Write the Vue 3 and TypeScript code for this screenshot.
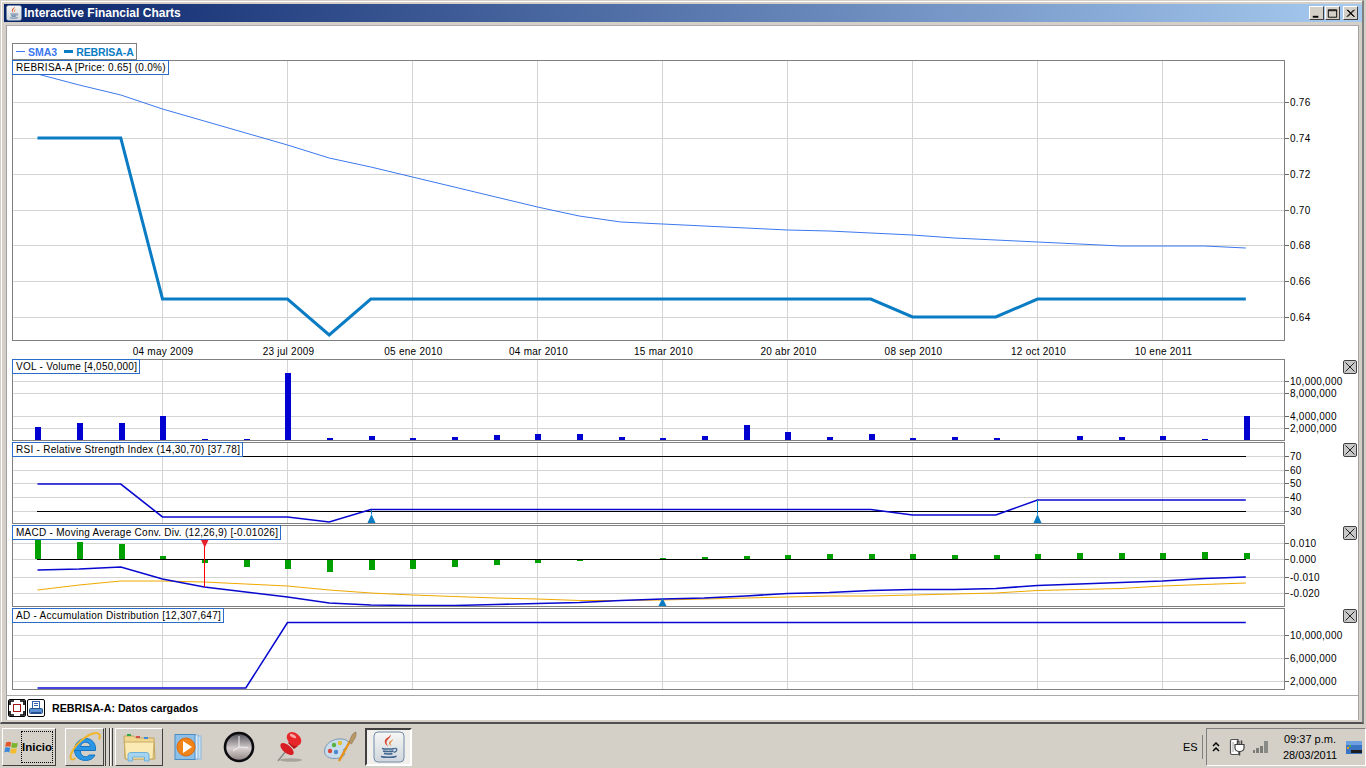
<template>
  <div class="screen">
    <svg class="defs" width="0" height="0">
      <symbol id="java-cup" viewBox="0 0 32 32">
        <rect x="1" y="1" width="30" height="30" rx="4" fill="url(#javaBg)" stroke="#6f8ba8" />
        <path d="M17.500 3.500c1.500 3-4.500 5-4 8.500.2 1.200 1 2.300 1.800 3.500-3-1.800-4.300-4-3.200-6.500 1.200-2.300 5-3.200 5.400-5.500z" fill="#d8452c" />
        <path d="M20 8c.5 1.800-3 3-2.500 5 .1.800.6 1.500 1 2-2.200-1-3-2.400-2.200-4 .8-1.300 3-1.600 3.700-3z" fill="#e8873a" />
        <path d="M9 17.500c2.500.8 10 .8 12.500 0M10 20c2 .7 8.500.7 10.500 0M11 22.500c2 .6 7 .6 8.500 0M8 25.500c3 1.200 12 1.200 15.500-.3" fill="none" stroke="#3f6590" stroke-width="1.500" />
        <path d="M21.500 17.500c3-.8 3.500 2.800-.8 3.800" fill="none" stroke="#3f6590" stroke-width="1.200" />
      </symbol>
      <linearGradient id="javaBg" x1="0" y1="0" x2="0" y2="1">
        <stop offset="0" stop-color="#f7f7f5" />
        <stop offset="1" stop-color="#cfd6dc" />
      </linearGradient>
    </svg>

    <div class="frame">
      <div class="titlebar">
        <svg class="title-icon" width="16" height="16"><use href="#java-cup" /></svg>
        <span class="title-text">Interactive Financial Charts</span>
        <div class="win-buttons">
          <button class="win-btn">
            <svg width="14" height="13" viewBox="0 0 14 13"><rect x="3" y="9" width="6" height="2" fill="#000" /></svg>
          </button>
          <button class="win-btn">
            <svg width="14" height="13" viewBox="0 0 14 13"><path d="M2.500 2.500h9v8h-9zM2.500 3.500h9" fill="none" stroke="#000" /></svg>
          </button>
          <button class="win-btn win-close">
            <svg width="14" height="13" viewBox="0 0 14 13"><path d="M3 2.500l7.500 7.500M4 2.500l7.500 7.500M10.500 2.500L3 10M11.500 2.500L4 10" stroke="#000" fill="none" /></svg>
          </button>
        </div>
      </div>

      <div class="client">
        <div class="charts">
          <div class="series-legend">
            <span class="swatch swatch-sma"></span><span class="name name-sma">SMA3</span>
            <span class="swatch swatch-price"></span><span class="name name-price">REBRISA-A</span>
          </div>

          <div v-for="p in panels" :key="p.id" class="panel" :style="{ height: p.height + 'px' }">
            <svg
              width="1346"
              :height="p.height"
              :viewBox="`12 ${p.top} 1346 ${p.height}`"
              class="plot"
            >
              <g shape-rendering="crispEdges" stroke="#d4d4d4">
                <line
                  v-for="x in gridX"
                  :key="x"
                  :x1="x"
                  :x2="x"
                  :y1="p.top"
                  :y2="p.top + p.plotH"
                />
                <line
                  v-for="t in p.ticks"
                  :key="t.y"
                  x1="12"
                  x2="1285"
                  :y1="t.y + 0.5"
                  :y2="t.y + 0.5"
                />
              </g>
              <g shape-rendering="crispEdges" stroke="#666">
                <line
                  v-for="t in p.ticks"
                  :key="t.y"
                  x1="1285"
                  x2="1289"
                  :y1="t.y + 0.5"
                  :y2="t.y + 0.5"
                />
              </g>
              <text v-for="t in p.ticks" :key="t.label" x="1290" :y="t.y + 4" class="axis">{{ t.label }}</text>

              <!-- vol / macd bars -->
              <g shape-rendering="crispEdges">
                <rect
                  v-for="(b, i) in p.bars"
                  :key="i"
                  :x="b.x"
                  :y="b.y"
                  width="6"
                  :height="b.h"
                  :fill="p.barColor"
                />
              </g>
              <g shape-rendering="crispEdges" stroke="#000">
                <line
                  v-for="y in p.blackLines"
                  :key="y"
                  x1="37"
                  x2="1246"
                  :y1="y + 0.5"
                  :y2="y + 0.5"
                />
              </g>
              <polyline
                v-for="l in p.lines"
                :key="l.color"
                :points="l.points"
                fill="none"
                :stroke="l.color"
                :stroke-width="l.width"
                stroke-linejoin="miter"
              />
              <g v-for="m in p.upMarks" :key="m.x">
                <line :x1="m.x" :x2="m.x" :y1="m.from" :y2="m.tip" stroke="#0a7cc4" />
                <path :d="`M${m.x} ${m.tip}l4 ${m.base - m.tip}h-8z`" fill="#0a7cc4" />
              </g>
              <g v-if="p.id === 'macd'">
                <line x1="204.500" x2="204.500" y1="543" y2="587" stroke="#f00" />
                <path d="M201 540h7.500l-3.700 7.500z" fill="#e8202c" />
              </g>

              <text
                v-for="d in p.dates"
                :key="d.label"
                :x="d.x"
                y="355"
                text-anchor="middle"
                class="axis"
              >{{ d.label }}</text>

              <rect
                x="12.500"
                :y="p.top + 0.5"
                width="1272"
                :height="p.plotH"
                fill="none"
                stroke="#808080"
                shape-rendering="crispEdges"
              />
            </svg>
            <div class="panel-tag">{{ p.title }}</div>
            <button v-if="p.closable" class="panel-close">
              <svg width="12" height="12" viewBox="0 0 12 12"><path d="M1.500 1.500l9 9M10.500 1.500l-9 9" stroke="#222" fill="none" /></svg>
            </button>
          </div>
        </div>

        <div class="statusbar">
          <button class="tool">
            <svg width="16" height="16" viewBox="0 0 16 16">
              <rect x="4.500" y="4.500" width="7" height="7" fill="none" stroke="#a01818" />
              <path d="M1 5V1h4M11 1h4v4M15 11v4h-4M5 15H1v-4" fill="none" stroke="#000" stroke-width="1.600" />
            </svg>
          </button>
          <button class="tool">
            <svg width="16" height="16" viewBox="0 0 16 16">
              <rect x="4.500" y="1.500" width="7" height="7" fill="#fff" stroke="#3060a8" />
              <path d="M6 3.500h4M6 5.500h4" stroke="#3060a8" />
              <rect x="1.500" y="8.500" width="13" height="5" rx="1" fill="#5c90d0" stroke="#24508c" />
              <rect x="3" y="12" width="10" height="2" fill="#24508c" />
            </svg>
          </button>
          <span class="status-text">REBRISA-A: Datos cargados</span>
        </div>
      </div>
    </div>

    <div class="taskbar">
      <button class="task-btn start">
        <svg width="16" height="15" viewBox="0 0 16 15" class="flag">
          <path d="M2 2.500c2-1.200 3.500-1 5.200-.2L6.300 7c-1.500-.8-3-.9-5-.1z" fill="#e2562a" />
          <path d="M8 2.600c1.700.8 3.500 1 5.800.1L13 7.300c-2.200.8-4 .6-5.800-.1z" fill="#7ab52c" />
          <path d="M1.200 7.800c2-.8 3.500-.6 5 .1l-.9 4.600c-1.500-.8-3-.9-5-.1z" fill="#3c8ad8" />
          <path d="M7 8.200c1.800.7 3.600.9 5.800.1L12 13c-2.200.8-4 .6-5.800-.1z" fill="#f2bc2c" />
        </svg>
        <span class="start-label">Inicio</span>
      </button>

      <button class="task-btn ie">
        <svg width="32" height="32" viewBox="0 0 32 32">
          <path d="M4.500 19.500h22c.8-7-3.500-12-9.500-12-6.500 0-11.500 5-11.500 11.500 0 6.500 5 10.500 11 10.500 4.500 0 8-2 9.500-5.500h-6c-1 1.200-2 1.700-3.500 1.700-2.800 0-5-2-5.200-5.700M11.500 15.500c.3-2.500 2.500-4.300 5-4.300s4.700 1.800 5 4.300z" fill="#2a96e4" stroke="#1676c4" stroke-width="1" fill-rule="evenodd" />
          <path d="M6.500 27C1 31 .5 26 3 21 7 12.500 19 2.500 27 2c4-.2 4.500 3 3 6.500" fill="none" stroke="#f0b628" stroke-width="2" />
        </svg>
      </button>
      <div class="task-handle"></div>
      <button class="task-btn folder">
        <svg width="33" height="31" viewBox="0 0 33 31">
          <path d="M1 4h10l2 2h18l1 21H2z" fill="#f0d690" stroke="#c4a65c" />
          <rect x="4" y="2" width="4" height="2" fill="#2fa84a" />
          <rect x="13" y="4" width="4" height="2" fill="#d8504a" />
          <rect x="21" y="5" width="4" height="2" fill="#3a8ad8" />
          <path d="M1.500 10h29.500l-1 17H2.500z" fill="#fbeab4" stroke="#c9ac64" />
          <path d="M5 23c0-1.500 1-2.500 2.500-2.500h16c1.500 0 2.500 1 2.500 2.500v6h-4.500v-4h-12v4H5z" fill="#a4d4f0" stroke="#6fb0d8" />
        </svg>
      </button>

      <div class="slot slot-media">
        <svg width="30" height="27" viewBox="0 0 30 27">
          <rect x="7" y="2" width="20" height="23" fill="#c6e0f4" stroke="#8fb8dc" />
          <rect x="4" y="1" width="20" height="24" fill="#dcecf8" stroke="#8fb8dc" />
          <rect x="1" y="0.500" width="20" height="25" fill="#8cc0e8" stroke="#4a8cc4" />
          <circle cx="12" cy="13" r="9" fill="#f08418" stroke="#d86810" />
          <path d="M9 7l9 6-9 6z" fill="#fff" />
        </svg>
      </div>
      <div class="slot slot-clock">
        <svg width="32" height="32" viewBox="0 0 32 32">
          <defs>
            <linearGradient id="clockFace" x1="0" y1="0" x2="0" y2="1">
              <stop offset="0" stop-color="#4c4c54" />
              <stop offset="0.55" stop-color="#d8d0d0" />
              <stop offset="1" stop-color="#8a8080" />
            </linearGradient>
          </defs>
          <circle cx="16" cy="16" r="14" fill="url(#clockFace)" stroke="#0c0c10" stroke-width="2.600" />
          <path d="M16 5v11l-6 4M16 16l9 .5" fill="none" stroke="#f0f0f0" stroke-width="1" />
        </svg>
      </div>
      <div class="slot slot-pin">
        <svg width="28" height="32" viewBox="0 0 28 32">
          <ellipse cx="15" cy="29" rx="11" ry="1.800" fill="#a8a49c" />
          <path d="M2 30l8-10" stroke="#8a8a88" stroke-width="1.500" />
          <path d="M15 9l7 6-4 3-6-6z" fill="#b81616" />
          <ellipse cx="11" cy="18" rx="8" ry="4" transform="rotate(40 11 18)" fill="#d81e22" />
          <ellipse cx="18" cy="8" rx="8" ry="6" transform="rotate(40 18 8)" fill="#e8262a" />
          <ellipse cx="17" cy="5" rx="3.500" ry="1.500" transform="rotate(30 17 5)" fill="#f8a8a8" />
        </svg>
      </div>
      <div class="slot slot-paint">
        <svg width="34" height="32" viewBox="0 0 34 32">
          <path d="M1.500 21C1 13 10 7 19 8c6 .6 8 4 6 7-1.800 2.500-4 1.500-4.500 4-.6 2.500 2.500 3 .5 5.500C17 29 2 29 1.500 21z" fill="#c8dcec" stroke="#7a98b4" />
          <circle cx="7" cy="20" r="2.200" fill="#d84838" />
          <circle cx="11" cy="14" r="2.200" fill="#58b040" />
          <circle cx="17" cy="12" r="2.200" fill="#e4c030" />
          <circle cx="13" cy="21" r="2.200" fill="#4c88d0" />
          <path d="M16 30L27 10" stroke="#e89018" stroke-width="2.400" />
          <path d="M26 11l3-7c1-2 4-3 4-3s.5 4-1 6l-3.500 6z" fill="#b89868" stroke="#806840" stroke-width="0.500" />
        </svg>
      </div>
      <button class="task-btn java active">
        <svg width="32" height="32"><use href="#java-cup" /></svg>
      </button>

      <div class="lang">ES</div>
      <div class="tray">
        <svg width="8" height="10" viewBox="0 0 8 10">
          <path d="M1 4l3-3 3 3M1 9l3-3 3 3" fill="none" stroke="#000" stroke-width="1.500" />
        </svg>
        <svg class="tray-plug" width="16" height="18" viewBox="0 0 16 18">
          <path d="M3 1.500h6v2h1V15c0 1-.5 1.500-1.500 1.500H3C2 16.500 1.500 16 1.500 15V3C1.500 2 2 1.500 3 1.500z" fill="#fff" stroke="#505050" stroke-width="1.200" />
          <path d="M4 4v10" stroke="#a0a0a0" />
          <path d="M6 6.500h9v3.500c0 2-2 3.500-4.500 3.500S6 12 6 10z" fill="#fff" stroke="#404040" stroke-width="1.200" />
          <path d="M8.500 6.500V2.500M12.500 6.500V2.500M10.500 13.500v4" stroke="#404040" stroke-width="1.500" />
        </svg>
        <svg class="tray-signal" width="16" height="12" viewBox="0 0 16 12">
          <rect x="0" y="9" width="2" height="3" fill="#7c7c78" />
          <rect x="3" y="7" width="3" height="5" fill="#7c7c78" />
          <rect x="7" y="5" width="3" height="7" fill="#7c7c78" />
          <rect x="11" y="0" width="4" height="12" fill="#8a8a86" />
        </svg>
        <div class="clock">
          <div>09:37 p.m.</div>
          <div>28/03/2011</div>
        </div>
        <svg class="tray-desktop" width="16" height="13" viewBox="0 0 16 13">
          <rect width="16" height="13" fill="#3c74c4" />
          <rect x="0" y="0" width="16" height="4" fill="#6ca0e0" />
          <rect x="5" y="9" width="11" height="3" fill="#1c1c20" />
          <rect x="1" y="6" width="2" height="2" fill="#e8a020" />
          <rect x="3" y="4" width="2" height="2" fill="#58b040" />
        </svg>
      </div>
    </div>
  </div>
</template>

<script setup lang="ts">
interface Tick {
  y: number;
  label: string;
}

interface Bar {
  x: number;
  y: number;
  h: number;
}

interface Line {
  color: string;
  width: number;
  points: string;
}

interface UpMark {
  x: number;
  from: number;
  tip: number;
  base: number;
}

interface Panel {
  id: string;
  title: string;
  top: number;
  height: number;
  plotH: number;
  closable: boolean;
  ticks: Tick[];
  bars: Bar[];
  barColor: string;
  blackLines: number[];
  lines: Line[];
  upMarks: UpMark[];
  dates: { x: number; label: string }[];
}

const STEP = 125 / 3;
const gridX = [162.5, 287.5, 412.5, 537.5, 662.5, 787.5, 912.5, 1037.5, 1162.5];

const pointX = (i: number) => 37.5 + i * STEP;
const barX = (i: number) => Math.ceil(35 + i * STEP - 0.001);
const toLine = (ys: number[]) => ys.map((y, i) => `${pointX(i).toFixed(1)},${y}`).join(' ');

// y pixel of each sample, read off the chart
const sma = [74, 85, 95, 109, 121, 133, 145, 158, 167, 177, 187, 197, 207, 216, 222, 224, 226, 228, 230, 231, 233, 235, 238, 240, 242, 244, 246, 246, 246, 248];
const price = [138, 138, 138, 299, 299, 299, 299, 335, 299, 299, 299, 299, 299, 299, 299, 299, 299, 299, 299, 299, 299, 317, 317, 317, 299, 299, 299, 299, 299, 299];
const volTops = [427, 423, 423, 416, 439, 439, 373, 438, 436, 438, 437, 435, 434, 434, 437, 438, 436, 425, 432, 437, 434, 438, 437, 438, 440, 436, 437, 436, 439, 416];
const rsi = [484, 484, 484, 517, 517, 517, 517, 522, 509.5, 509.5, 509.5, 509.5, 509.5, 509.5, 509.5, 509.5, 509.5, 509.5, 509.5, 509.5, 509.5, 515, 515, 515, 500, 500, 500, 500, 500, 500];
const macdEnds = [539, 542, 544, 556, 563, 567, 569, 572, 570, 569, 567, 565, 563, 561, 559, 558, 557, 556, 555, 554, 554, 554, 555, 555, 554, 553, 553, 553, 552, 553];
const macd = [570, 569, 567, 579, 587, 592, 597, 603, 605, 605.5, 605.5, 604.5, 603.5, 602.5, 600.5, 599, 598, 596, 593.5, 592.5, 590.5, 589.5, 589.5, 588.5, 585.5, 584, 582.5, 581, 578.5, 577];
const signal = [590, 585, 581, 581, 582, 584, 586, 590, 593, 595, 596.5, 598, 599, 600.5, 600.5, 600, 599, 598, 597, 596, 596, 595, 594, 593, 590.5, 589.5, 588.5, 586, 584.5, 583];
const ad = Array.from({ length: 30 }, (_, i) => (i <= 5 ? 688 : 622.5));

const panels: Panel[] = [
  {
    id: 'price',
    title: 'REBRISA-A [Price: 0.65] (0.0%)',
    top: 60,
    height: 298,
    plotH: 280,
    closable: false,
    ticks: [
      { y: 102, label: '0.76' },
      { y: 138, label: '0.74' },
      { y: 174, label: '0.72' },
      { y: 210, label: '0.70' },
      { y: 245, label: '0.68' },
      { y: 281, label: '0.66' },
      { y: 317, label: '0.64' },
    ],
    bars: [],
    barColor: '',
    blackLines: [],
    lines: [
      { color: '#3c78f0', width: 1, points: toLine(sma) },
      { color: '#0a7cc4', width: 3, points: toLine(price) },
    ],
    upMarks: [],
    dates: [
      { x: 163, label: '04 may 2009' },
      { x: 288.5, label: '23 jul 2009' },
      { x: 413.5, label: '05 ene 2010' },
      { x: 538.5, label: '04 mar 2010' },
      { x: 663.5, label: '15 mar 2010' },
      { x: 788.5, label: '20 abr 2010' },
      { x: 913.5, label: '08 sep 2010' },
      { x: 1038.5, label: '12 oct 2010' },
      { x: 1163.5, label: '10 ene 2011' },
    ],
  },
  {
    id: 'vol',
    title: 'VOL - Volume [4,050,000]',
    top: 359,
    height: 82,
    plotH: 81,
    closable: true,
    ticks: [
      { y: 381, label: '10,000,000' },
      { y: 393, label: '8,000,000' },
      { y: 416, label: '4,000,000' },
      { y: 428, label: '2,000,000' },
    ],
    bars: volTops.map((y, i) => ({ x: barX(i), y, h: 440 - y })),
    barColor: '#0000d0',
    blackLines: [],
    lines: [],
    upMarks: [],
    dates: [],
  },
  {
    id: 'rsi',
    title: 'RSI - Relative Strength Index (14,30,70) [37.78]',
    top: 442,
    height: 82,
    plotH: 81,
    closable: true,
    ticks: [
      { y: 456, label: '70' },
      { y: 470, label: '60' },
      { y: 483, label: '50' },
      { y: 497, label: '40' },
      { y: 511, label: '30' },
    ],
    bars: [],
    barColor: '',
    blackLines: [456, 511],
    lines: [{ color: '#0808d0', width: 1.6, points: toLine(rsi) }],
    upMarks: [
      { x: 371.5, from: 510, tip: 514, base: 523 },
      { x: 1037.5, from: 500, tip: 514, base: 523 },
    ],
    dates: [],
  },
  {
    id: 'macd',
    title: 'MACD - Moving Average Conv. Div. (12,26,9) [-0.01026]',
    top: 525,
    height: 82,
    plotH: 81,
    closable: true,
    ticks: [
      { y: 543, label: '0.010' },
      { y: 559, label: '0.000' },
      { y: 577, label: '-0.010' },
      { y: 593, label: '-0.020' },
    ],
    bars: macdEnds.map((e, i) => ({
      x: barX(i),
      y: Math.min(e, 559),
      h: Math.abs(559 - e),
    })),
    barColor: '#00a000',
    blackLines: [559],
    lines: [
      { color: '#f0a800', width: 1, points: toLine(signal) },
      { color: '#0808d0', width: 1.6, points: toLine(macd) },
    ],
    upMarks: [{ x: 662.5, from: 600, tip: 598, base: 606 }],
    dates: [],
  },
  {
    id: 'ad',
    title: 'AD - Accumulation Distribution [12,307,647]',
    top: 608,
    height: 82,
    plotH: 81,
    closable: true,
    ticks: [
      { y: 635, label: '10,000,000' },
      { y: 658, label: '6,000,000' },
      { y: 681, label: '2,000,000' },
    ],
    bars: [],
    barColor: '',
    blackLines: [],
    lines: [{ color: '#0808d0', width: 1.6, points: toLine(ad) }],
    upMarks: [],
    dates: [],
  },
];
</script>

<style>
html,
body {
  margin: 0;
  background: #d4d0c8;
  overflow: hidden;
}
</style>

<style scoped>
.screen {
  width: 1366px;
  height: 768px;
  display: flex;
  flex-direction: column;
  background: #d4d0c8;
  font-family: "Liberation Sans", Arial, sans-serif;
  color: #000;
}

.defs {
  position: absolute;
}

.frame {
  box-sizing: border-box;
  height: 724px;
  padding: 3px 0 0 3px;
  margin-right: 2px;
  border-top: 1px solid #d4d0c8;
  border-left: 1px solid #d4d0c8;
  border-right: 2px solid #808080;
  border-bottom: 2px solid #505050;
  box-shadow: inset 1px 1px 0 #fff;
  display: flex;
  flex-direction: column;
}

.titlebar {
  height: 18px;
  flex: none;
  display: flex;
  align-items: center;
  padding-left: 2px;
  background: linear-gradient(to right, #0a246a, #a6caf0);
}

.title-icon {
  flex: none;
}

.title-text {
  margin-left: 2px;
  color: #fff;
  font: bold 12px "Liberation Sans", Tahoma, sans-serif;
}

.win-buttons {
  margin-left: auto;
  margin-right: 4px;
  display: flex;
  gap: 1px;
}

.win-close {
  margin-left: 2px;
}

.win-btn {
  box-sizing: border-box;
  width: 15px;
  height: 14px;
  padding: 0;
  background: #d4d0c8;
  border: 1px solid;
  border-color: #fff #404040 #404040 #fff;
  display: flex;
}

.win-btn svg {
  display: block;
}

.client {
  flex: 1;
  margin: 3px 3px 2px 2px;
  background: #fff;
  border-top: 1px solid #b0a8b0;
  border-left: 1px solid #a0a0a0;
  border-right: 1px solid #a0a0a0;
  display: flex;
  flex-direction: column;
}

.charts {
  padding: 17px 0 0 5px;
  display: flex;
  flex-direction: column;
  border-bottom: 1px solid #a8a8a8;
  height: 652px;
  box-sizing: content-box;
}

.series-legend {
  box-sizing: border-box;
  width: 125px;
  height: 17px;
  border: 1px solid #808080;
  display: flex;
  align-items: center;
  font-size: 10.5px;
  font-weight: bold;
  padding-left: 3px;
  white-space: nowrap;
}

.swatch {
  width: 9px;
  flex: none;
}

.swatch-sma {
  height: 1px;
  background: #3c78f0;
}

.swatch-price {
  height: 3px;
  background: #0a7cc4;
  margin-left: 7px;
}

.name {
  margin-left: 3px;
}

.name-sma {
  color: #3c78f0;
}

.name-price {
  color: #0a7cc4;
  letter-spacing: -0.1px;
}

.panel {
  position: relative;
  flex: none;
  margin-bottom: 1px;
}

.plot {
  display: block;
}

.axis {
  font-size: 10px;
  fill: #000;
  letter-spacing: 0.25px;
}

.panel-tag {
  position: absolute;
  top: 0;
  left: 0;
  box-sizing: border-box;
  height: 15px;
  line-height: 13px;
  padding: 0 2px 0 3px;
  background: #fff;
  border: 1px solid #2a6cc8;
  font-size: 10px;
  letter-spacing: 0.27px;
  white-space: nowrap;
}

.panel-close {
  position: absolute;
  top: 1px;
  left: 1331px;
  box-sizing: border-box;
  width: 14px;
  height: 14px;
  padding: 0;
  background: #c8c8c8;
  border: 1px solid #404040;
  border-radius: 2px;
  display: flex;
  align-items: center;
  justify-content: center;
}

.statusbar {
  flex: 1;
  display: flex;
  align-items: center;
  padding-left: 1px;
  gap: 1px;
}

.tool {
  box-sizing: border-box;
  width: 18px;
  height: 18px;
  padding: 0;
  background: #fff;
  border: 1px solid #000;
  border-radius: 2px;
  display: flex;
  align-items: center;
  justify-content: center;
}

.status-text {
  margin-left: 6px;
  font: bold 10.7px "Liberation Sans", Tahoma, sans-serif;
  white-space: nowrap;
}

.taskbar {
  flex: 1;
  display: flex;
  align-items: center;
  padding-top: 2px;
  font-family: "Liberation Sans", Tahoma, sans-serif;
  font-size: 11px;
}

.task-btn {
  box-sizing: border-box;
  height: 38px;
  padding: 0;
  background: #d4d0c8;
  border: 1px solid;
  border-color: #fff #404040 #404040 #fff;
  display: flex;
  align-items: center;
  justify-content: center;
  flex: none;
}

.start {
  width: 54px;
  margin-left: 2px;
  justify-content: flex-start;
  padding-left: 1px;
}

.start-label {
  box-sizing: border-box;
  width: 32px;
  height: 32px;
  margin-left: 1px;
  border: 1px dotted #000;
  text-align: center;
  font: bold 11.5px / 30px "Liberation Sans", Tahoma, sans-serif;
}

.ie {
  width: 39px;
  margin-left: 9px;
}

.task-handle {
  width: 8px;
  height: 38px;
  margin: 0 2px 0 1px;
  border-left: 1px solid #404040;
  border-right: 1px solid #404040;
  box-sizing: border-box;
  background: linear-gradient(to right, #d4d0c8 0 3px, #404040 3px 4px, #fff 4px 5px, #d4d0c8 5px);
  flex: none;
}

.folder {
  width: 48px;
}

.slot {
  height: 38px;
  display: flex;
  align-items: center;
  justify-content: center;
  flex: none;
}

.slot-media {
  width: 51px;
}

.slot-clock {
  width: 50px;
}

.slot-pin {
  width: 52px;
}

.slot-paint {
  width: 48px;
}

.java {
  width: 47px;
  margin-left: 1px;
}

.active {
  background: #f2f0ec;
  border-color: #404040 #fff #fff #404040;
  border-width: 2px;
}

.lang {
  margin-left: auto;
  width: 23px;
  height: 24px;
  line-height: 24px;
  padding-left: 3px;
  border-right: 1px solid #808080;
  font-size: 11px;
  box-sizing: border-box;
  margin-right: 3px;
  flex: none;
}

.tray {
  box-sizing: border-box;
  width: 160px;
  height: 38px;
  border: 1px solid;
  border-color: #808080 #fff #fff #808080;
  display: flex;
  align-items: center;
  padding-left: 5px;
  flex: none;
}

.tray-plug {
  margin-left: 9px;
}

.tray-signal {
  margin-left: 8px;
}

.clock {
  width: 66px;
  margin-left: 8px;
  text-align: center;
  font-size: 11px;
  line-height: 16px;
  flex: none;
}

.tray-desktop {
  margin-left: 3px;
  flex: none;
}
</style>
